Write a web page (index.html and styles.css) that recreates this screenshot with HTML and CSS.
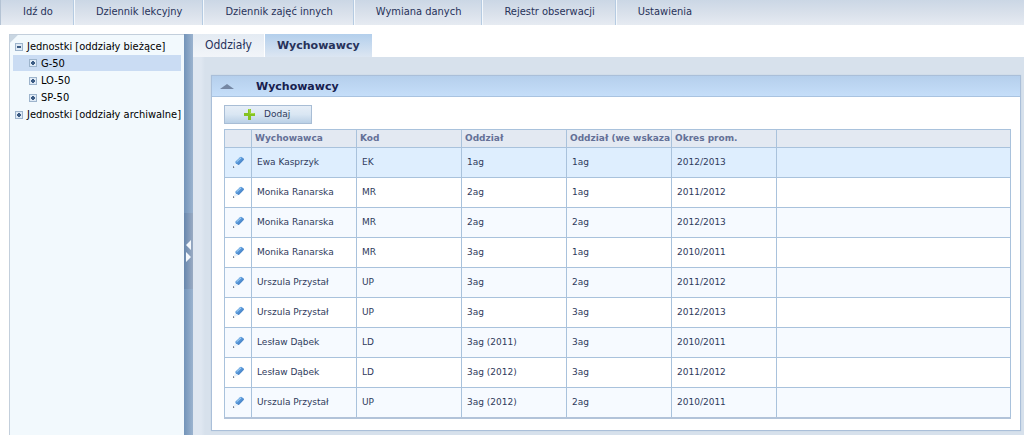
FILE: index.html
```html
<!DOCTYPE html>
<html lang="pl">
<head>
<meta charset="utf-8">
<title>Wychowawcy</title>
<link rel="stylesheet" href="styles.css">
</head>
<body>
<svg class="defs" width="0" height="0" aria-hidden="true">
  <defs>
    <linearGradient id="pen" x1="0" y1="0" x2="1" y2="1">
      <stop offset="0" stop-color="#8fc4f0"/><stop offset=".5" stop-color="#5796d8"/><stop offset="1" stop-color="#2d62a8"/>
    </linearGradient>
    <symbol id="pencil" viewBox="0 0 13 13">
      <path d="M3.4 5.6 8 1.2Q8.8.5 9.7 1L11.7 2.4Q12.4 3.1 11.7 4L7.4 8.6Q6.7 9.2 5.9 8.7L3.7 7.3Q2.9 6.4 3.4 5.6Z" fill="url(#pen)"/>
      <path d="M4.8 5.7 9 1.9" stroke="#a9d3f5" stroke-width="1"/>
      <path d="M3.2 7.4 6.2 9.3 3 10.8 1.6 10.2Z" fill="#e9f1f9"/>
      <path d="M1 10 2.5 11.2 1 12Z" fill="#4a4f5c"/>
    </symbol>
    <symbol id="plus" viewBox="0 0 11 11">
      <path d="M4 0H7V4H11V7H7V11H4V7H0V4H4Z" fill="#84c323"/>
      <path d="M4.500 .5H6V4.500H10.500" fill="none" stroke="#a9dc4a"/>
    </symbol>
  </defs>
</svg>
<nav class="menu">
  <a href="#">Idź do</a>
  <a href="#">Dziennik lekcyjny</a>
  <a href="#">Dziennik zajęć innych</a>
  <a href="#">Wymiana danych</a>
  <a href="#">Rejestr obserwacji</a>
  <a href="#">Ustawienia</a>
</nav>
<div class="workspace">
  <aside class="sidebar">
    <ul class="tree">
      <li><button class="toggle minus" aria-label="Zwiń"></button><a href="#">Jednostki [oddziały bieżące]</a></li>
      <li class="child selected"><button class="toggle" aria-label="Rozwiń"></button><a href="#">G-50</a></li>
      <li class="child"><button class="toggle" aria-label="Rozwiń"></button><a href="#">LO-50</a></li>
      <li class="child"><button class="toggle" aria-label="Rozwiń"></button><a href="#">SP-50</a></li>
      <li><button class="toggle" aria-label="Rozwiń"></button><a href="#">Jednostki [oddziały archiwalne]</a></li>
    </ul>
  </aside>
  <div class="splitter">
    <button class="grip" aria-label="Zmień szerokość">
      <svg width="5" height="24" viewBox="0 0 5 24"><path d="M5 1V11L0 6ZM0 13V23L5 18Z" fill="#f4f8fc"/></svg>
    </button>
  </div>
  <main class="content">
    <div class="tabs">
      <button class="tab">Oddziały</button>
      <button class="tab active">Wychowawcy</button>
    </div>
    <div class="page">
      <section class="panel">
        <header class="panel-head">
          <svg width="14" height="5" viewBox="0 0 14 5"><path d="M0 5 7 0 14 5Z" fill="#7587a3"/></svg>
          <h1>Wychowawcy</h1>
        </header>
        <div class="panel-body">
          <button class="add"><svg width="11" height="11"><use href="#plus"/></svg>Dodaj</button>
          <table class="grid">
            <colgroup><col class="c-icon"><col class="c"><col class="c"><col class="c"><col class="c"><col class="c"><col></colgroup>
            <thead><tr><th></th><th>Wychowawca</th><th>Kod</th><th>Oddział</th><th>Oddział (we wskaza</th><th>Okres prom.</th><th></th></tr></thead>
            <tbody>
              <tr class="current"><td><svg class="pencil"><use href="#pencil"/></svg></td><td>Ewa Kasprzyk</td><td>EK</td><td>1ag</td><td>1ag</td><td>2012/2013</td><td></td></tr>
              <tr><td><svg class="pencil"><use href="#pencil"/></svg></td><td>Monika Ranarska</td><td>MR</td><td>2ag</td><td>1ag</td><td>2011/2012</td><td></td></tr>
              <tr><td><svg class="pencil"><use href="#pencil"/></svg></td><td>Monika Ranarska</td><td>MR</td><td>2ag</td><td>2ag</td><td>2012/2013</td><td></td></tr>
              <tr><td><svg class="pencil"><use href="#pencil"/></svg></td><td>Monika Ranarska</td><td>MR</td><td>3ag</td><td>1ag</td><td>2010/2011</td><td></td></tr>
              <tr><td><svg class="pencil"><use href="#pencil"/></svg></td><td>Urszula Przystał</td><td>UP</td><td>3ag</td><td>2ag</td><td>2011/2012</td><td></td></tr>
              <tr><td><svg class="pencil"><use href="#pencil"/></svg></td><td>Urszula Przystał</td><td>UP</td><td>3ag</td><td>3ag</td><td>2012/2013</td><td></td></tr>
              <tr><td><svg class="pencil"><use href="#pencil"/></svg></td><td>Lesław Dąbek</td><td>LD</td><td>3ag (2011)</td><td>3ag</td><td>2010/2011</td><td></td></tr>
              <tr><td><svg class="pencil"><use href="#pencil"/></svg></td><td>Lesław Dąbek</td><td>LD</td><td>3ag (2012)</td><td>3ag</td><td>2011/2012</td><td></td></tr>
              <tr><td><svg class="pencil"><use href="#pencil"/></svg></td><td>Urszula Przystał</td><td>UP</td><td>3ag (2012)</td><td>2ag</td><td>2010/2011</td><td></td></tr>
            </tbody>
          </table>
        </div>
      </section>
    </div>
  </main>
</div>
</body>
</html>
```

FILE: styles.css
```css
* { box-sizing: border-box; }
body {
  margin: 0;
  min-height: 100vh;
  display: flex;
  flex-direction: column;
  font: 11px/17px "DejaVu Sans Condensed", "DejaVu Sans", sans-serif;
  color: #27325a;
  background: #fff;
}
a { color: inherit; text-decoration: none; }
button { font: inherit; color: inherit; border: 0; padding: 0; }
.defs { position: absolute; }

.menu {
  display: flex;
  height: 25px;
  padding-left: 1px;
  border-left: 1px solid #b4c3d4;
  background: linear-gradient(#cbd7e5, #dbe2ec 60%, #e6ebf2);
}
.menu a {
  padding: 3px 21px 0;
  border-right: 1px solid #f4f8fc;
  box-shadow: inset -1px 0 #b5cbe2;
}
.menu a:last-child { border-right: 0; box-shadow: none; }

.workspace {
  flex: 1;
  display: flex;
  margin-top: 9px;
  padding-left: 9px;
}
.sidebar {
  flex: none;
  width: 175px;
  padding: 3px 3px 0;
  border: 1px solid #c3cfdc;
  border-width: 1px 0 0 1px;
  background: linear-gradient(135deg, #c9d6e2 5px, #f2f9fd 6px);
  color: #000;
}
.tree { list-style: none; margin: 0; padding: 0; }
.tree li {
  display: flex;
  align-items: center;
  gap: 4px;
  height: 17px;
  padding-left: 2px;
  white-space: nowrap;
}
.tree .child { padding-left: 16px; }
.tree .selected {
  background: #cadcf3;
  background-clip: padding-box;
  border-bottom: 1px solid transparent;
}
.toggle {
  flex: none;
  width: 8px;
  height: 8px;
  border: 1px solid #9db4cc;
  background:
    linear-gradient(#3c5c84, #3c5c84) center / 4px 2px no-repeat,
    linear-gradient(#3c5c84, #3c5c84) center / 2px 4px no-repeat,
    #dfeaf5;
}
.toggle.minus { background: linear-gradient(#3c5c84, #3c5c84) center / 4px 2px no-repeat, #dfeaf5; }

.splitter {
  flex: none;
  width: 9px;
  display: flex;
  align-items: center;
  background: linear-gradient(90deg, #7394b9, #9bb3cf);
}
.grip {
  width: 9px;
  height: 76px;
  display: flex;
  align-items: center;
  justify-content: center;
  margin-top: 32px;
  background: linear-gradient(90deg, #6787ad, #9aabc3);
}

.content { flex: 1; min-width: 0; display: flex; flex-direction: column; }
.tabs { display: flex; gap: 1px; height: 23px; font-size: 12px; }
.tab { padding: 0 12px; background: linear-gradient(#e4ebf3, #f2f5f9); }
.tab.active {
  font-family: "DejaVu Sans", sans-serif;
  font-size: 11px;
  font-weight: bold;
  background: linear-gradient(#b3cfec, #dce6f2);
}
.page {
  flex: 1;
  padding: 18px 3px 4px 18px;
  background: linear-gradient(90deg, #dfe7f1 8px, #d7e1ec 12px);
}
.panel { border: 1px solid #aabfd9; background: #fff; box-shadow: 0 0 1px #b5c6dc; }
.panel-head {
  display: flex;
  align-items: center;
  gap: 22px;
  height: 21px;
  padding-left: 8px;
  border-bottom: 1px solid #a9c3e0;
  background: linear-gradient(#b5cfec, #c5def9);
}
.panel-head h1 { margin: 0; font: bold 11px/17px "DejaVu Sans", sans-serif; color: #17204f; }
.panel-body {
  padding: 8px 9px 11px 12px;
  font: 9px/11px "DejaVu Sans", sans-serif;
  color: #2f3a5c;
}
.add {
  display: flex;
  align-items: center;
  gap: 9px;
  width: 88px;
  height: 19px;
  padding-left: 19px;
  margin-bottom: 5px;
  border: 1px solid #a8bdd5;
  background: linear-gradient(#e6eef7, #d9e6f3 50%, #bad0e6);
}
.grid {
  width: 100%;
  table-layout: fixed;
  border-collapse: collapse;
  border-bottom: 2px solid #b2c3d9;
}
.c-icon { width: 27px; }
.c { width: 105px; }
.grid th, .grid td {
  padding: 0 0 0 5px;
  border: 1px solid #a9c2dc;
  text-align: left;
  white-space: nowrap;
  overflow: hidden;
}
.grid th {
  height: 18px;
  padding-left: 3px;
  background: #e3e9f2;
  color: #647097;
}
.grid td { height: 30px; }
.grid tbody tr:nth-child(odd) { background: #f6faff; }
.grid tbody tr.current { background: #deeefe; }
.grid td:first-child { padding-left: 7px; }
.pencil { display: block; width: 13px; height: 13px; }
```
